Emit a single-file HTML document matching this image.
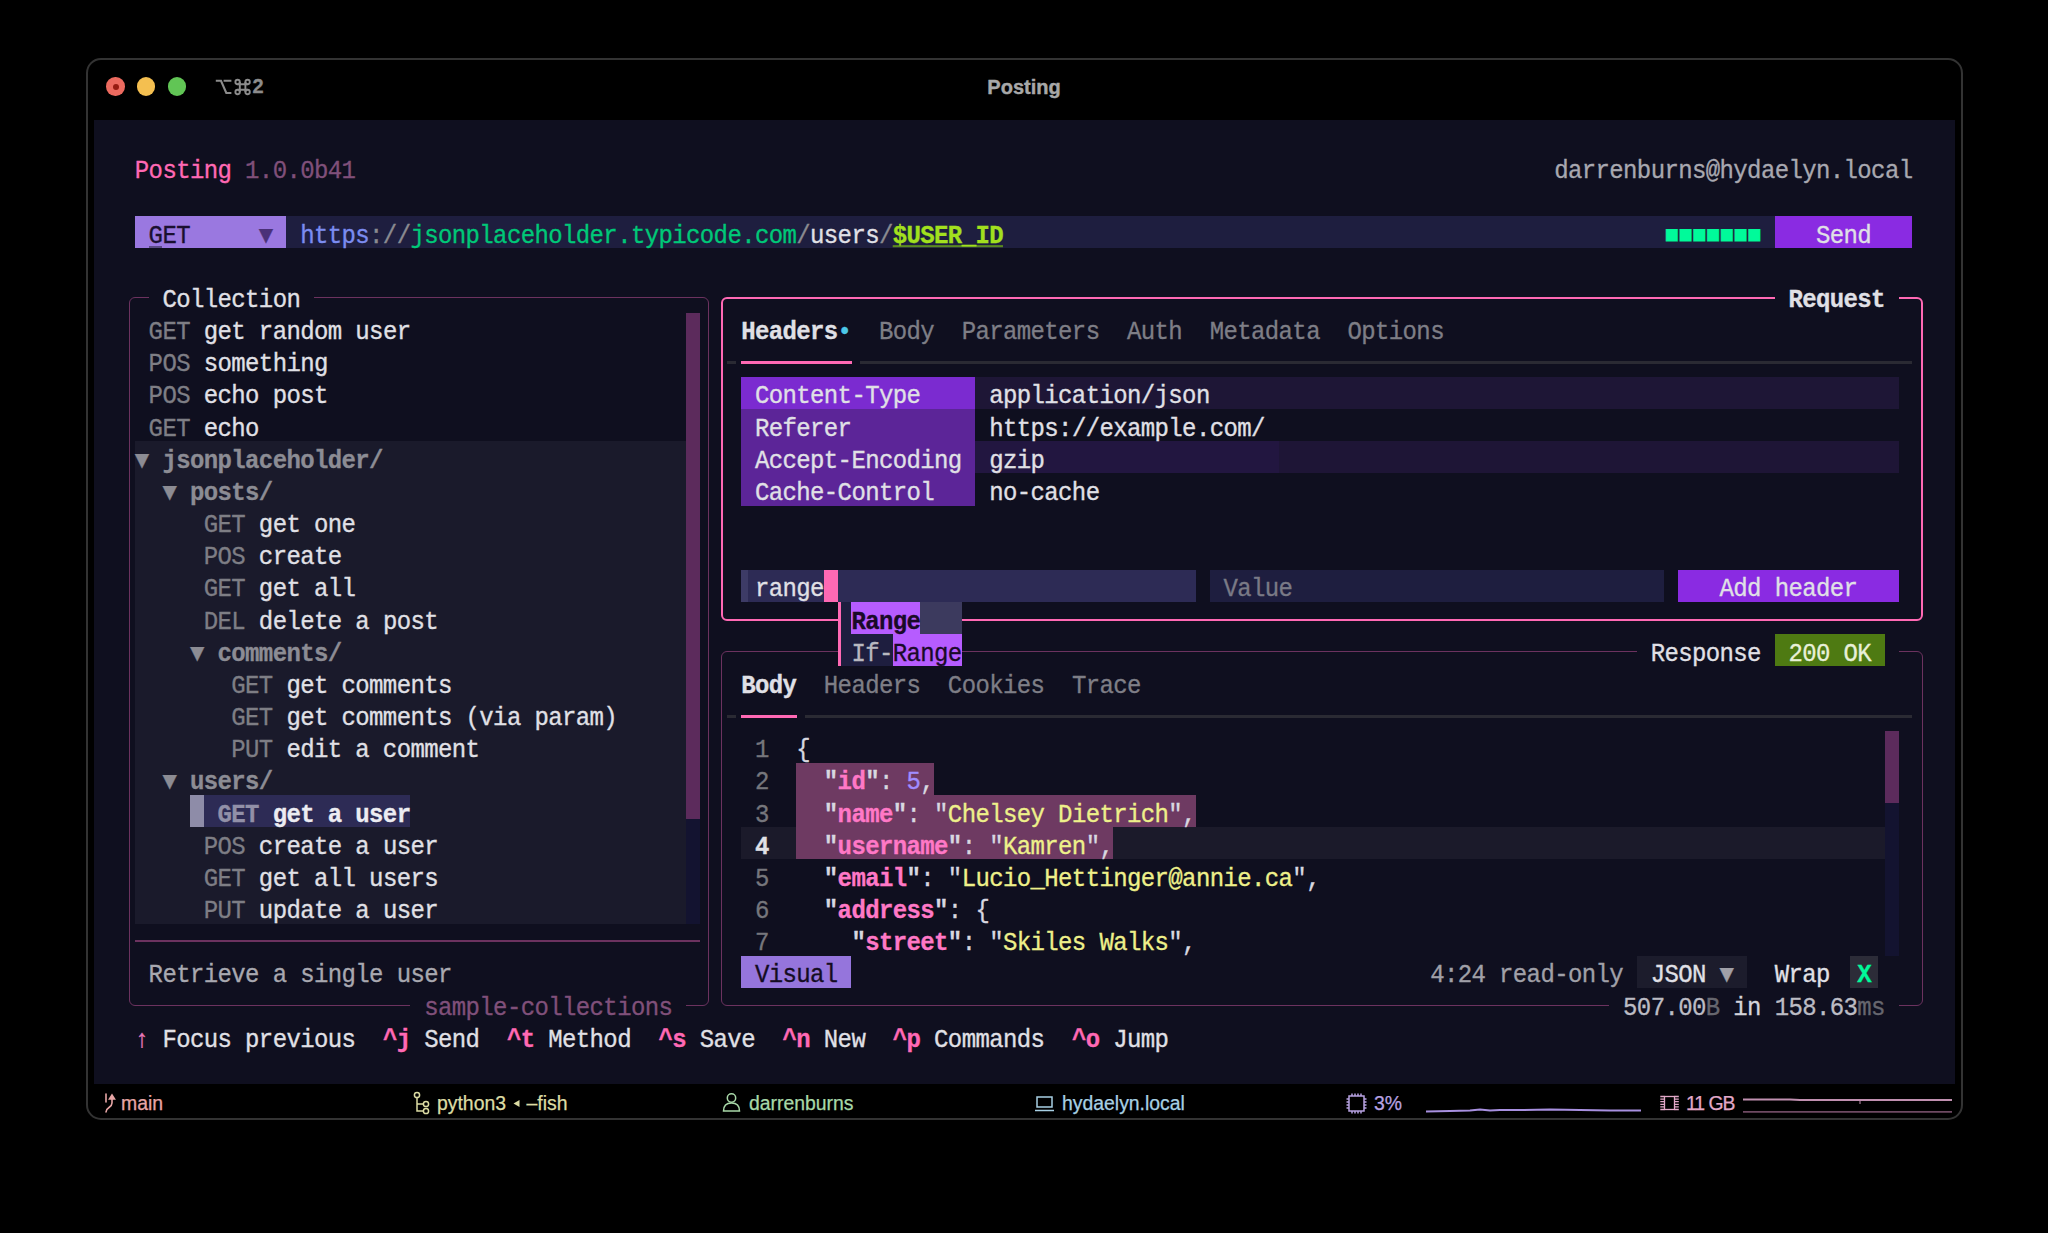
<!DOCTYPE html>
<html><head><meta charset="utf-8"><title>Posting</title><style>
html,body{margin:0;padding:0;background:#000;width:2048px;height:1233px;overflow:hidden;}
#root{position:relative;width:2048px;height:1233px;overflow:hidden;background:#000;}
#root div, #root span{position:absolute;}
.t{font-family:"Liberation Mono",monospace;font-size:24px;letter-spacing:-0.622px;line-height:32.17px;white-space:pre;transform:scaleY(1.06);transform-origin:0 21.8px;-webkit-text-stroke:0.3px currentColor;}
.s{font-family:"Liberation Sans",sans-serif;white-space:pre;line-height:1.2;}
</style></head>
<body><div id="root">
<div style="left:85.5px;top:58.2px;width:1877px;height:1061.8px;border:2px solid #333;border-radius:15px;background:#000;box-sizing:border-box;"></div>
<div style="left:93.50px;top:119.50px;width:1861.20px;height:964.50px;background:#0f0f1f;"></div>
<div style="left:106.3px;top:77.4px;width:18.4px;height:18.4px;border-radius:50%;background:#ec6a5f;"></div>
<div style="left:137.1px;top:77.4px;width:18.4px;height:18.4px;border-radius:50%;background:#f4bf50;"></div>
<div style="left:167.9px;top:77.4px;width:18.4px;height:18.4px;border-radius:50%;background:#61c555;"></div>
<div style="left:112.6px;top:83.5px;width:6.2px;height:6.2px;border-radius:50%;background:#961c12;"></div>
<div style="left:128.65px;top:296.95px;width:580.30px;height:709.00px;border:1.9px solid #6c325f;border-radius:6px;box-sizing:border-box;"></div>
<div style="left:721.30px;top:296.90px;width:1201.30px;height:323.80px;border:2.0px solid #ff69b4;border-radius:6px;box-sizing:border-box;"></div>
<div style="left:721.35px;top:650.85px;width:1201.20px;height:355.10px;border:1.9px solid #6c325f;border-radius:6px;box-sizing:border-box;"></div>
<div style="left:148.62px;top:296.30px;width:165.36px;height:3.00px;background:#0f0f1f;"></div>
<div style="left:1774.66px;top:296.30px;width:124.02px;height:3.00px;background:#0f0f1f;"></div>
<div style="left:1636.86px;top:650.30px;width:261.82px;height:3.00px;background:#0f0f1f;"></div>
<div style="left:1609.30px;top:1003.50px;width:289.38px;height:3.00px;background:#0f0f1f;"></div>
<div style="left:410.44px;top:1003.50px;width:275.60px;height:3.00px;background:#0f0f1f;"></div>
<div style="left:134.84px;top:939.65px;width:564.98px;height:1.90px;background:#6c325f;"></div>
<div style="left:727.38px;top:360.90px;width:8.50px;height:2.90px;background:#2a2a33;"></div>
<div style="left:741.16px;top:360.90px;width:111.24px;height:2.90px;background:#ff69b4;"></div>
<div style="left:859.90px;top:360.90px;width:1052.56px;height:2.90px;background:#2a2a33;"></div>
<div style="left:727.38px;top:714.60px;width:8.50px;height:3.00px;background:#2a2a33;"></div>
<div style="left:741.16px;top:714.60px;width:56.12px;height:3.00px;background:#ff69b4;"></div>
<div style="left:804.78px;top:714.60px;width:1107.68px;height:3.00px;background:#2a2a33;"></div>
<div style="left:134.84px;top:216.01px;width:151.58px;height:32.17px;background:#9a78e0;"></div>
<div style="left:286.42px;top:216.01px;width:1488.24px;height:32.17px;background:#1e1e3f;"></div>
<div style="left:1774.66px;top:216.01px;width:137.80px;height:32.17px;background:#8a2be2;"></div>
<div style="left:134.84px;top:441.20px;width:551.20px;height:482.55px;background:#1a1a2b;"></div>
<div style="left:686.04px;top:312.52px;width:13.78px;height:611.23px;background:#131330;"></div>
<div style="left:686.04px;top:312.52px;width:13.78px;height:506.88px;background:#5c2b5c;"></div>
<div style="left:189.96px;top:795.07px;width:220.48px;height:32.17px;background:#2d2b55;"></div>
<div style="left:189.96px;top:795.07px;width:13.78px;height:32.17px;background:#8e8ca8;"></div>
<div style="left:741.16px;top:376.86px;width:234.26px;height:32.17px;background:#7b2bd0;"></div>
<div style="left:741.16px;top:409.03px;width:234.26px;height:96.51px;background:#5c2598;"></div>
<div style="left:975.42px;top:376.86px;width:923.26px;height:32.17px;background:#1e1636;"></div>
<div style="left:975.42px;top:441.20px;width:303.16px;height:32.17px;background:#221640;"></div>
<div style="left:1278.58px;top:441.20px;width:620.10px;height:32.17px;background:#1e1536;"></div>
<div style="left:741.16px;top:569.88px;width:454.74px;height:32.17px;background:#2d2b55;"></div>
<div style="left:741.16px;top:569.88px;width:7.00px;height:32.17px;background:#3d3b66;"></div>
<div style="left:823.84px;top:569.88px;width:13.78px;height:32.17px;background:#ff69b4;"></div>
<div style="left:1209.68px;top:569.88px;width:454.74px;height:32.17px;background:#1e1e3f;"></div>
<div style="left:1678.20px;top:569.88px;width:220.48px;height:32.17px;background:#8a2be2;"></div>
<div style="left:796.28px;top:762.90px;width:137.80px;height:32.17px;background:#6e3a62;"></div>
<div style="left:796.28px;top:795.07px;width:399.62px;height:32.17px;background:#6e3a62;"></div>
<div style="left:741.16px;top:827.24px;width:1143.74px;height:32.17px;background:#1b1a2a;"></div>
<div style="left:796.28px;top:827.24px;width:316.94px;height:32.17px;background:#6e3a62;"></div>
<div style="left:1884.90px;top:730.73px;width:13.78px;height:225.19px;background:#131330;"></div>
<div style="left:1884.90px;top:730.73px;width:13.78px;height:72.47px;background:#5c2b5c;"></div>
<div style="left:741.16px;top:955.92px;width:110.24px;height:32.17px;background:#9575dc;"></div>
<div style="left:1636.86px;top:955.92px;width:110.24px;height:32.17px;background:#1c1c2c;"></div>
<div style="left:1850.45px;top:955.92px;width:27.56px;height:32.17px;background:#2c2c38;"></div>
<div style="left:1774.66px;top:634.22px;width:110.24px;height:32.17px;background:#4e7a12;"></div>
<div style="left:837.62px;top:602.05px;width:124.02px;height:64.34px;background:#1e1e3f;"></div>
<div style="left:837.62px;top:602.05px;width:3.40px;height:64.34px;background:#ff69b4;"></div>
<div style="left:851.40px;top:602.05px;width:68.90px;height:32.17px;background:#b65cff;"></div>
<div style="left:920.30px;top:602.05px;width:41.34px;height:32.17px;background:#3c3a5e;"></div>
<div style="left:892.74px;top:634.22px;width:68.90px;height:32.17px;background:#b65cff;"></div>
<span class="t" style="left:134.84px;top:156.17px;color:#ff69b4;">Posting</span>
<span class="t" style="left:245.08px;top:156.17px;color:#80507a;">1.0.0b41</span>
<span class="t" style="left:1554.18px;top:156.17px;color:#a8a8b0;">darrenburns@hydaelyn.local</span>
<span class="t" style="left:148.62px;top:220.51px;color:#1a1030;">GET</span>
<div style="left:148.70px;top:246.30px;width:13.50px;height:1.60px;background:#5a4a86;"></div>
<span class="t" style="left:258.86px;top:220.51px;color:#4a3078;">▼</span>
<span class="t" style="left:300.20px;top:220.51px;color:#7b8cf0;">https</span>
<span class="t" style="left:369.10px;top:220.51px;color:#8a8a90;">://</span>
<span class="t" style="left:410.44px;top:220.51px;color:#00c878;">jsonplaceholder.typicode.com</span>
<span class="t" style="left:796.28px;top:220.51px;color:#8a8a90;">/</span>
<span class="t" style="left:810.06px;top:220.51px;color:#e0e0e6;">users</span>
<span class="t" style="left:878.96px;top:220.51px;color:#8a8a90;">/</span>
<span class="t" style="left:892.74px;top:220.51px;color:#a2e01e;font-weight:bold;text-decoration:underline;text-decoration-color:#5a8a20;">$USER_ID</span>
<span class="t" style="left:1664.42px;top:220.51px;color:#00fa9a;">■■■■■■■</span>
<span class="t" style="left:1816.00px;top:220.51px;color:#e0e0e6;">Send</span>
<span class="t" style="left:162.40px;top:284.85px;color:#e0e0e6;">Collection</span>
<span class="t" style="left:148.62px;top:317.02px;color:#7e7e85;">GET</span>
<span class="t" style="left:203.74px;top:317.02px;color:#e0e0e6;">get random user</span>
<span class="t" style="left:148.62px;top:349.19px;color:#7e7e85;">POS</span>
<span class="t" style="left:203.74px;top:349.19px;color:#e0e0e6;">something</span>
<span class="t" style="left:148.62px;top:381.36px;color:#7e7e85;">POS</span>
<span class="t" style="left:203.74px;top:381.36px;color:#e0e0e6;">echo post</span>
<span class="t" style="left:148.62px;top:413.53px;color:#7e7e85;">GET</span>
<span class="t" style="left:203.74px;top:413.53px;color:#e0e0e6;">echo</span>
<span class="t" style="left:203.74px;top:510.04px;color:#7e7e85;">GET</span>
<span class="t" style="left:258.86px;top:510.04px;color:#e0e0e6;">get one</span>
<span class="t" style="left:203.74px;top:542.21px;color:#7e7e85;">POS</span>
<span class="t" style="left:258.86px;top:542.21px;color:#e0e0e6;">create</span>
<span class="t" style="left:203.74px;top:574.38px;color:#7e7e85;">GET</span>
<span class="t" style="left:258.86px;top:574.38px;color:#e0e0e6;">get all</span>
<span class="t" style="left:203.74px;top:606.55px;color:#7e7e85;">DEL</span>
<span class="t" style="left:258.86px;top:606.55px;color:#e0e0e6;">delete a post</span>
<span class="t" style="left:231.30px;top:670.89px;color:#7e7e85;">GET</span>
<span class="t" style="left:286.42px;top:670.89px;color:#e0e0e6;">get comments</span>
<span class="t" style="left:231.30px;top:703.06px;color:#7e7e85;">GET</span>
<span class="t" style="left:286.42px;top:703.06px;color:#e0e0e6;">get comments (via param)</span>
<span class="t" style="left:231.30px;top:735.23px;color:#7e7e85;">PUT</span>
<span class="t" style="left:286.42px;top:735.23px;color:#e0e0e6;">edit a comment</span>
<span class="t" style="left:203.74px;top:831.74px;color:#7e7e85;">POS</span>
<span class="t" style="left:258.86px;top:831.74px;color:#e0e0e6;">create a user</span>
<span class="t" style="left:203.74px;top:863.91px;color:#7e7e85;">GET</span>
<span class="t" style="left:258.86px;top:863.91px;color:#e0e0e6;">get all users</span>
<span class="t" style="left:203.74px;top:896.08px;color:#7e7e85;">PUT</span>
<span class="t" style="left:258.86px;top:896.08px;color:#e0e0e6;">update a user</span>
<span class="t" style="left:134.84px;top:445.70px;color:#8c8c94;">▼</span>
<span class="t" style="left:162.40px;top:445.70px;color:#8c8c94;font-weight:bold;">jsonplaceholder/</span>
<span class="t" style="left:162.40px;top:477.87px;color:#8c8c94;">▼</span>
<span class="t" style="left:189.96px;top:477.87px;color:#8c8c94;font-weight:bold;">posts/</span>
<span class="t" style="left:189.96px;top:638.72px;color:#8c8c94;">▼</span>
<span class="t" style="left:217.52px;top:638.72px;color:#8c8c94;font-weight:bold;">comments/</span>
<span class="t" style="left:162.40px;top:767.40px;color:#8c8c94;">▼</span>
<span class="t" style="left:189.96px;top:767.40px;color:#8c8c94;font-weight:bold;">users/</span>
<span class="t" style="left:217.52px;top:799.57px;color:#9290a8;font-weight:bold;">GET</span>
<span class="t" style="left:272.64px;top:799.57px;color:#ececf2;font-weight:bold;">get a user</span>
<span class="t" style="left:148.62px;top:960.42px;color:#a8a8b0;">Retrieve a single user</span>
<span class="t" style="left:424.22px;top:992.59px;color:#80507a;">sample-collections</span>
<span class="t" style="left:1788.44px;top:284.85px;color:#e0e0e6;font-weight:bold;">Request</span>
<span class="t" style="left:741.16px;top:317.02px;color:#e0e0e6;font-weight:bold;">Headers</span>
<span class="t" style="left:837.62px;top:317.02px;color:#4cc8e8;">•</span>
<span class="t" style="left:878.96px;top:317.02px;color:#7e7e86;">Body</span>
<span class="t" style="left:961.64px;top:317.02px;color:#7e7e86;">Parameters</span>
<span class="t" style="left:1127.00px;top:317.02px;color:#7e7e86;">Auth</span>
<span class="t" style="left:1209.68px;top:317.02px;color:#7e7e86;">Metadata</span>
<span class="t" style="left:1347.48px;top:317.02px;color:#7e7e86;">Options</span>
<span class="t" style="left:754.94px;top:381.36px;color:#e0e0e6;">Content-Type</span>
<span class="t" style="left:989.20px;top:381.36px;color:#e0e0e6;">application/json</span>
<span class="t" style="left:754.94px;top:413.53px;color:#e0e0e6;">Referer</span>
<span class="t" style="left:989.20px;top:413.53px;color:#e0e0e6;">https:</span>
<span class="t" style="left:1071.88px;top:413.53px;color:#e0e0e6;">//example.com/</span>
<span class="t" style="left:754.94px;top:445.70px;color:#e0e0e6;">Accept-Encoding</span>
<span class="t" style="left:989.20px;top:445.70px;color:#e0e0e6;">gzip</span>
<span class="t" style="left:754.94px;top:477.87px;color:#e0e0e6;">Cache-Control</span>
<span class="t" style="left:989.20px;top:477.87px;color:#e0e0e6;">no-cache</span>
<span class="t" style="left:754.94px;top:574.38px;color:#e0e0e6;">range</span>
<span class="t" style="left:1223.46px;top:574.38px;color:#7a7a86;">Value</span>
<span class="t" style="left:1719.54px;top:574.38px;color:#e0e0e6;">Add header</span>
<span class="t" style="left:851.40px;top:606.55px;color:#1a0a28;font-weight:bold;">Range</span>
<span class="t" style="left:851.40px;top:638.72px;color:#b8b8c0;">If-</span>
<span class="t" style="left:892.74px;top:638.72px;color:#1a0a28;">Range</span>
<span class="t" style="left:1650.64px;top:638.72px;color:#e0e0e6;">Response</span>
<span class="t" style="left:1788.44px;top:638.72px;color:#e8f0d8;">200 OK</span>
<span class="t" style="left:741.16px;top:670.89px;color:#e0e0e6;font-weight:bold;">Body</span>
<span class="t" style="left:823.84px;top:670.89px;color:#7e7e86;">Headers</span>
<span class="t" style="left:947.86px;top:670.89px;color:#7e7e86;">Cookies</span>
<span class="t" style="left:1071.88px;top:670.89px;color:#7e7e86;">Trace</span>
<span class="t" style="left:754.94px;top:735.23px;color:#76767c;">1</span>
<span class="t" style="left:754.94px;top:767.40px;color:#76767c;">2</span>
<span class="t" style="left:754.94px;top:799.57px;color:#76767c;">3</span>
<span class="t" style="left:754.94px;top:831.74px;color:#e0e0e6;font-weight:bold;">4</span>
<span class="t" style="left:754.94px;top:863.91px;color:#76767c;">5</span>
<span class="t" style="left:754.94px;top:896.08px;color:#76767c;">6</span>
<span class="t" style="left:754.94px;top:928.25px;color:#76767c;">7</span>
<span class="t" style="left:796.28px;top:735.23px;color:#d8d8e0;">{</span>
<span class="t" style="left:823.84px;top:767.40px;color:#d8d8e0;font-weight:bold;">&quot;</span>
<span class="t" style="left:837.62px;top:767.40px;color:#ff78c6;font-weight:bold;">id</span>
<span class="t" style="left:865.18px;top:767.40px;color:#d8d8e0;font-weight:bold;">&quot;</span>
<span class="t" style="left:878.96px;top:767.40px;color:#d8d8e0;">: </span>
<span class="t" style="left:906.52px;top:767.40px;color:#a08cff;">5</span>
<span class="t" style="left:920.30px;top:767.40px;color:#d8d8e0;">,</span>
<span class="t" style="left:823.84px;top:799.57px;color:#d8d8e0;font-weight:bold;">&quot;</span>
<span class="t" style="left:837.62px;top:799.57px;color:#ff78c6;font-weight:bold;">name</span>
<span class="t" style="left:892.74px;top:799.57px;color:#d8d8e0;font-weight:bold;">&quot;</span>
<span class="t" style="left:906.52px;top:799.57px;color:#d8d8e0;">: </span>
<span class="t" style="left:934.08px;top:799.57px;color:#d8d8e0;">&quot;</span>
<span class="t" style="left:947.86px;top:799.57px;color:#eef08a;">Chelsey Dietrich</span>
<span class="t" style="left:1168.34px;top:799.57px;color:#d8d8e0;">&quot;</span>
<span class="t" style="left:1182.12px;top:799.57px;color:#d8d8e0;">,</span>
<span class="t" style="left:823.84px;top:831.74px;color:#d8d8e0;font-weight:bold;">&quot;</span>
<span class="t" style="left:837.62px;top:831.74px;color:#ff78c6;font-weight:bold;">username</span>
<span class="t" style="left:947.86px;top:831.74px;color:#d8d8e0;font-weight:bold;">&quot;</span>
<span class="t" style="left:961.64px;top:831.74px;color:#d8d8e0;">: </span>
<span class="t" style="left:989.20px;top:831.74px;color:#d8d8e0;">&quot;</span>
<span class="t" style="left:1002.98px;top:831.74px;color:#eef08a;">Kamren</span>
<span class="t" style="left:1085.66px;top:831.74px;color:#d8d8e0;">&quot;</span>
<span class="t" style="left:1099.44px;top:831.74px;color:#d8d8e0;">,</span>
<span class="t" style="left:823.84px;top:863.91px;color:#d8d8e0;font-weight:bold;">&quot;</span>
<span class="t" style="left:837.62px;top:863.91px;color:#ff78c6;font-weight:bold;">email</span>
<span class="t" style="left:906.52px;top:863.91px;color:#d8d8e0;font-weight:bold;">&quot;</span>
<span class="t" style="left:920.30px;top:863.91px;color:#d8d8e0;">: </span>
<span class="t" style="left:947.86px;top:863.91px;color:#d8d8e0;">&quot;</span>
<span class="t" style="left:961.64px;top:863.91px;color:#eef08a;">Lucio_Hettinger@annie.ca</span>
<span class="t" style="left:1292.36px;top:863.91px;color:#d8d8e0;">&quot;</span>
<span class="t" style="left:1306.14px;top:863.91px;color:#d8d8e0;">,</span>
<span class="t" style="left:823.84px;top:896.08px;color:#d8d8e0;font-weight:bold;">&quot;</span>
<span class="t" style="left:837.62px;top:896.08px;color:#ff78c6;font-weight:bold;">address</span>
<span class="t" style="left:934.08px;top:896.08px;color:#d8d8e0;font-weight:bold;">&quot;</span>
<span class="t" style="left:947.86px;top:896.08px;color:#d8d8e0;">: </span>
<span class="t" style="left:975.42px;top:896.08px;color:#d8d8e0;">{</span>
<span class="t" style="left:851.40px;top:928.25px;color:#d8d8e0;font-weight:bold;">&quot;</span>
<span class="t" style="left:865.18px;top:928.25px;color:#ff78c6;font-weight:bold;">street</span>
<span class="t" style="left:947.86px;top:928.25px;color:#d8d8e0;font-weight:bold;">&quot;</span>
<span class="t" style="left:961.64px;top:928.25px;color:#d8d8e0;">: </span>
<span class="t" style="left:989.20px;top:928.25px;color:#d8d8e0;">&quot;</span>
<span class="t" style="left:1002.98px;top:928.25px;color:#eef08a;">Skiles Walks</span>
<span class="t" style="left:1168.34px;top:928.25px;color:#d8d8e0;">&quot;</span>
<span class="t" style="left:1182.12px;top:928.25px;color:#d8d8e0;">,</span>
<span class="t" style="left:754.94px;top:960.42px;color:#140c22;">Visual</span>
<span class="t" style="left:1430.16px;top:960.42px;color:#a0a0a8;">4:24 read-only</span>
<span class="t" style="left:1650.64px;top:960.42px;color:#e0e0e6;">JSON</span>
<span class="t" style="left:1719.54px;top:960.42px;color:#a0a0a8;">▼</span>
<span class="t" style="left:1774.66px;top:960.42px;color:#e0e0e6;">Wrap</span>
<span class="t" style="left:1857.34px;top:960.42px;color:#00fa9a;font-weight:bold;">X</span>
<span class="t" style="left:1623.08px;top:992.59px;color:#bcbcc4;">507.00</span>
<span class="t" style="left:1705.76px;top:992.59px;color:#66666e;">B</span>
<span class="t" style="left:1719.54px;top:992.59px;color:#d4d4da;"> in </span>
<span class="t" style="left:1774.66px;top:992.59px;color:#bcbcc4;">158.63</span>
<span class="t" style="left:1857.34px;top:992.59px;color:#66666e;">ms</span>
<span class="t" style="left:134.84px;top:1024.76px;color:#e878bc;">↑</span>
<span class="t" style="left:162.40px;top:1024.76px;color:#e0e0e6;">Focus previous</span>
<span class="t" style="left:382.88px;top:1024.76px;color:#ff69b4;font-weight:bold;">^j</span>
<span class="t" style="left:424.22px;top:1024.76px;color:#e0e0e6;">Send</span>
<span class="t" style="left:506.90px;top:1024.76px;color:#ff69b4;font-weight:bold;">^t</span>
<span class="t" style="left:548.24px;top:1024.76px;color:#e0e0e6;">Method</span>
<span class="t" style="left:658.48px;top:1024.76px;color:#ff69b4;font-weight:bold;">^s</span>
<span class="t" style="left:699.82px;top:1024.76px;color:#e0e0e6;">Save</span>
<span class="t" style="left:782.50px;top:1024.76px;color:#ff69b4;font-weight:bold;">^n</span>
<span class="t" style="left:823.84px;top:1024.76px;color:#e0e0e6;">New</span>
<span class="t" style="left:892.74px;top:1024.76px;color:#ff69b4;font-weight:bold;">^p</span>
<span class="t" style="left:934.08px;top:1024.76px;color:#e0e0e6;">Commands</span>
<span class="t" style="left:1071.88px;top:1024.76px;color:#ff69b4;font-weight:bold;">^o</span>
<span class="t" style="left:1113.22px;top:1024.76px;color:#e0e0e6;">Jump</span>
<span class="s" style="left:252.6px;top:74.3px;font-size:20px;color:#8c8c8c;font-weight:bold;-webkit-text-stroke:0.3px #8c8c8c;">2</span>
<span class="s" style="left:0;width:2048px;text-align:center;top:75px;font-size:20px;color:#a8a8a8;font-weight:bold;-webkit-text-stroke:0.4px #a8a8a8;">Posting</span>
<span class="s" style="left:121px;top:1092.3px;font-size:19.4px;-webkit-text-stroke:0.25px currentColor;color:#e8a6a6;">main</span>
<span class="s" style="left:437px;top:1092.3px;font-size:19.4px;-webkit-text-stroke:0.25px currentColor;color:#dcdca4;">python3</span>
<span class="s" style="left:526.5px;top:1092.3px;font-size:19.4px;-webkit-text-stroke:0.25px currentColor;color:#dcdca4;">–fish</span>
<span class="s" style="left:749px;top:1092.3px;font-size:19.4px;-webkit-text-stroke:0.25px currentColor;color:#a8d8a8;">darrenburns</span>
<span class="s" style="left:1062px;top:1092.3px;font-size:19.4px;-webkit-text-stroke:0.25px currentColor;color:#a8d0e4;">hydaelyn.local</span>
<span class="s" style="left:1374px;top:1092.3px;font-size:19.4px;-webkit-text-stroke:0.25px currentColor;color:#b8a2e2;">3%</span>
<span class="s" style="left:1686px;top:1092.3px;font-size:19.4px;-webkit-text-stroke:0.25px currentColor;letter-spacing:-1px;color:#e2a8c8;">11 GB</span>
<svg style="position:absolute;left:0;top:0" width="2048" height="1233" fill="none"><g stroke="#e8a6a6" stroke-width="1.6" stroke-linecap="round"><path d="M106 1094 v8"/><path d="M106 1112 c0-5 6-4 6-9 v-6"/><path d="M109.5 1099 l2.5-4 l2.5 4 z" fill="#e8a6a6"/></g><g stroke="#dcdca4" stroke-width="1.5"><circle cx="417" cy="1095" r="2.6"/><circle cx="426" cy="1104" r="2.6"/><circle cx="426" cy="1111" r="2.6"/><path d="M417 1098 v13 h6 M417 1104 h6"/></g><path d="M513.5 1103.5 L519.5 1100 V1107 Z" fill="#dcdca4"/><g stroke="#a8d8a8" stroke-width="1.5"><circle cx="731.5" cy="1098" r="4.2"/><path d="M723.5 1111 c0-6 4-8 8-8 s8 2 8 8 z"/></g><g stroke="#a8d0e4" stroke-width="1.5"><rect x="1037" y="1097" width="15" height="10"/><path d="M1035 1110.5 h19"/></g><g stroke="#b8a2e2" stroke-width="1.5"><rect x="1349" y="1096" width="15" height="15"/><path d="M1352 1093.5v2.5M1355 1093.5v2.5M1358 1093.5v2.5M1361 1093.5v2.5M1352 1111v2.5M1355 1111v2.5M1358 1111v2.5M1361 1111v2.5M1346.5 1099h2.5M1346.5 1102h2.5M1346.5 1105h2.5M1346.5 1108h2.5M1364 1099h2.5M1364 1102h2.5M1364 1105h2.5M1364 1108h2.5"/></g><path d="M1426 1111.5 L1450 1111 L1470 1110.5 L1480 1109.5 L1490 1110.5 L1500 1110 L1520 1110 L1550 1109.5 L1580 1110 L1610 1110.5 L1641 1110.5" stroke="#a890e0" stroke-width="2"/><g stroke="#e2a8c8" stroke-width="1.3"><rect x="1664.5" y="1096.5" width="10" height="13"/><path d="M1660.3 1096.5h4.2M1660.3 1099.1h4.2M1660.3 1101.7h4.2M1660.3 1104.3h4.2M1660.3 1106.9h4.2M1660.3 1109.5h4.2M1674.5 1096.5h4.3M1674.5 1099.1h4.3M1674.5 1101.7h4.3M1674.5 1104.3h4.3M1674.5 1106.9h4.3M1674.5 1109.5h4.3"/></g><path d="M1743 1099.5 H1790 L1800 1100 H1952" stroke="#c090b0" stroke-width="1.8"/><path d="M1860 1100 v4" stroke="#c090b0" stroke-width="1"/><path d="M1743 1111.8 H1952" stroke="#6e4a62" stroke-width="1.8"/><path d="M215.8 80.8 H221 L226.3 93 H231.4 M223.6 80.8 H231.4" stroke="#8c8c8c" stroke-width="2.1"/><g stroke="#8c8c8c" stroke-width="1.9"><path d="M239.8 82.0 V92.0 M245.4 82.0 V92.0 M237.60000000000002 84.2 H247.6 M237.60000000000002 89.8 H247.6"/><circle cx="237.60000000000002" cy="82.0" r="2.2"/><circle cx="247.6" cy="82.0" r="2.2"/><circle cx="237.60000000000002" cy="92.0" r="2.2"/><circle cx="247.6" cy="92.0" r="2.2"/></g></svg>
</div></body></html>
